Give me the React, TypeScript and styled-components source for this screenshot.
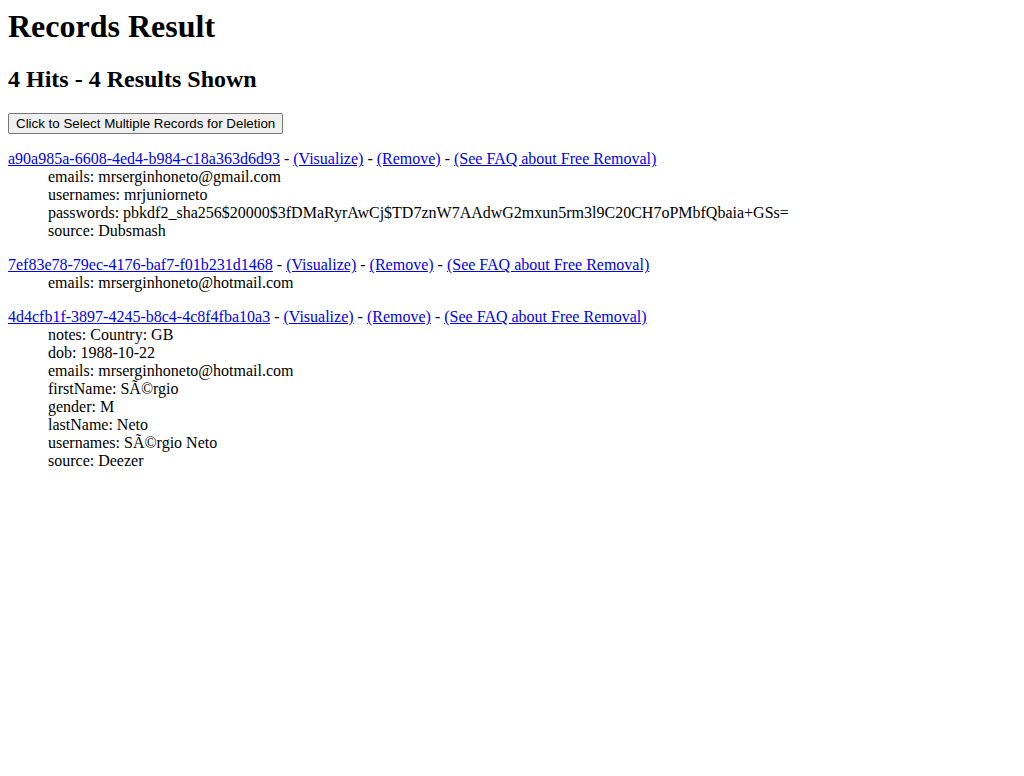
import React from "react";
import styled, { createGlobalStyle } from "styled-components";

const Global = createGlobalStyle`
  html, body { margin: 0; padding: 0; background: #ffffff; }
  body {
    margin: 8px;
    font-family: "Liberation Serif", "Times New Roman", serif;
    font-size: 16px;
    color: #000000;
  }
`;

const Page = styled.div`
  display: flow-root;
`;

const Title = styled.h1`
  font-size: 32px;
  font-weight: bold;
  margin: 0 0 21.44px 0;
`;

const Subtitle = styled.h2`
  font-size: 24px;
  font-weight: bold;
  margin: 19.92px 0;
`;

const DeleteButton = styled.button`
  font-family: "Liberation Sans", Arial, sans-serif;
  font-size: 13.333px;
  padding: 1px 7px;
  background: #efefef;
  border: 1px solid #767676;
  border-radius: 2px;
  color: #000;
  height: 21px;
  line-height: normal;
`;

const Record = styled.div`
  margin: 16px 0;
`;

const Header = styled.div`
  line-height: 18px;
`;

const Link = styled.a`
  color: #0000ee;
  text-decoration: underline;
`;

const Field = styled.div`
  padding-left: 40px;
  line-height: 18px;
`;

type Rec = { id: string; fields: string[] };

const records: Rec[] = [
  {
    id: "a90a985a-6608-4ed4-b984-c18a363d6d93",
    fields: [
      "emails: mrserginhoneto@gmail.com",
      "usernames: mrjuniorneto",
      "passwords: pbkdf2_sha256$20000$3fDMaRyrAwCj$TD7znW7AAdwG2mxun5rm3l9C20CH7oPMbfQbaia+GSs=",
      "source: Dubsmash",
    ],
  },
  {
    id: "7ef83e78-79ec-4176-baf7-f01b231d1468",
    fields: ["emails: mrserginhoneto@hotmail.com"],
  },
  {
    id: "4d4cfb1f-3897-4245-b8c4-4c8f4fba10a3",
    fields: [
      "notes: Country: GB",
      "dob: 1988-10-22",
      "emails: mrserginhoneto@hotmail.com",
      "firstName: SÃ©rgio",
      "gender: M",
      "lastName: Neto",
      "usernames: SÃ©rgio Neto",
      "source: Deezer",
    ],
  },
];

export default function App() {
  return (
    <Page>
      <Global />
      <Title>Records Result</Title>
      <Subtitle>4 Hits - 4 Results Shown</Subtitle>
      <DeleteButton>Click to Select Multiple Records for Deletion</DeleteButton>
      {records.map((r) => (
        <Record key={r.id}>
          <Header>
            <Link href="#">{r.id}</Link> - <Link href="#">(Visualize)</Link> -{" "}
            <Link href="#">(Remove)</Link> -{" "}
            <Link href="#">(See FAQ about Free Removal)</Link>
          </Header>
          {r.fields.map((f, i) => (
            <Field key={i}>{f}</Field>
          ))}
        </Record>
      ))}
    </Page>
  );
}
